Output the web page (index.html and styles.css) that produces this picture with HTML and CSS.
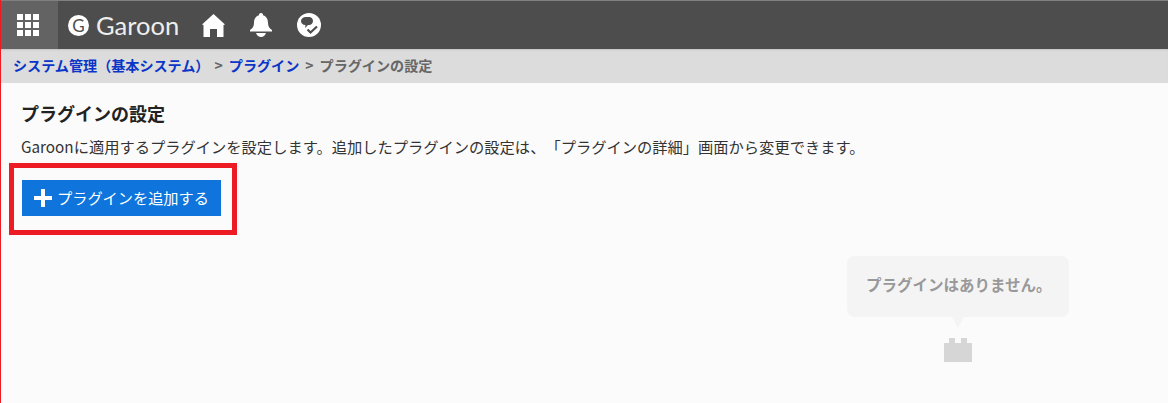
FILE: index.html
```html
<!DOCTYPE html>
<html lang="ja">
<head>
<meta charset="utf-8">
<title>プラグインの設定</title>
<link rel="stylesheet" href="styles.css">
</head>
<body>
<div class="page">
  <header class="topbar">
    <div class="apps">
      <svg width="22" height="22" viewBox="0 0 22 22" fill="#fff"><rect x="0" y="0" width="6" height="6"/><rect x="8" y="0" width="6" height="6"/><rect x="16" y="0" width="6" height="6"/><rect x="0" y="8" width="6" height="6"/><rect x="8" y="8" width="6" height="6"/><rect x="16" y="8" width="6" height="6"/><rect x="0" y="16" width="6" height="6"/><rect x="8" y="16" width="6" height="6"/><rect x="16" y="16" width="6" height="6"/></svg>
    </div>
    <div class="logo">
      <span class="logo-mark">G</span>
      <span class="logo-text">Garoon</span>
    </div>
    <nav class="icons">
      <svg width="23" height="23" viewBox="0 0 23 23" fill="#fff"><path d="M11.500 0 L23 10.500 L21.500 11 V23 H15 V15 H8 V23 H1.500 V11 L0 10.500 Z"/></svg>
      <svg width="24" height="24" viewBox="0 0 24 24" fill="#fff"><path d="M12 0 a2 2 0 0 1 2 2.300 C18 3.500 19 7 19 10 C19 13.500 20.500 15.500 23 17 V18.500 H1 V17 C3.500 15.500 5 13.500 5 10 C5 7 6 3.500 10 2.300 A2 2 0 0 1 12 0 Z"/><path d="M7 20 H17 Q15.500 24 12 24 Q8.500 24 7 20 Z"/></svg>
      <svg width="24" height="24" viewBox="0 0 24 24"><circle cx="12" cy="12" r="12" fill="#fff"/><path d="M9 4 H12 C14.500 4 16 5.800 16 8 C16 10.200 14.500 12 12 12 H11 L8 15 L8.500 12 C5.500 12 4 10.200 4 8 C4 5.800 6 4 9 4 Z" fill="#4d4d4d"/><path d="M10.500 16.500 L13.500 19.500 L20 13.500" fill="none" stroke="#4d4d4d" stroke-width="2.200"/></svg>
    </nav>
  </header>
  <div class="crumbs">
    <a class="crumb-link">システム管理（基本システム）</a>
    <span class="crumb-sep">&gt;</span>
    <a class="crumb-link">プラグイン</a>
    <span class="crumb-sep">&gt;</span>
    <span class="crumb-current">プラグインの設定</span>
  </div>
  <main class="content">
    <h1 class="title">プラグインの設定</h1>
    <p class="desc">Garoonに適用するプラグインを設定します。追加したプラグインの設定は、「プラグインの詳細」画面から変更できます。</p>
    <button class="add-btn" type="button">
      <svg width="18" height="18" viewBox="0 0 18 18" fill="#fff"><path d="M7 0 H11 V7 H18 V11 H11 V18 H7 V11 H0 V7 H7 Z"/></svg>
      <span class="add-label">プラグインを追加する</span>
    </button>
    <div class="empty">
      <div class="bubble">プラグインはありません。</div>
      <svg class="brick" width="28" height="24" viewBox="0 0 28 24" fill="#d6d6d6"><path d="M5 0 H11 V5 H17 V0 H23 V5 H28 V24 H0 V5 H5 Z"/></svg>
    </div>
  </main>
  <div class="highlight"></div>
</div>
</body>
</html>
```
FILE: styles.css
```css
* { box-sizing: border-box; }
html, body { margin: 0; height: 100%; }
body {
  font-family: "Noto Sans CJK JP", "Liberation Sans", sans-serif;
  background: #fbfbfb;
  overflow: hidden;
  text-spacing-trim: space-all;
}
.page {
  position: relative;
  height: 403px;
  border-left: 1px solid #ed1c24;
  display: flex;
  flex-direction: column;
}
.topbar {
  height: 49px;
  background: #4d4d4d;
  border-top: 1px solid #808080;
  display: flex;
  align-items: center;
  flex: none;
}
.apps {
  width: 57px;
  height: 48px;
  background: #636363;
  display: flex;
  align-items: center;
  padding-left: 16px;
}
.logo {
  display: flex;
  align-items: center;
  margin-left: 10px;
  gap: 7px;
  width: 123px;
}
.logo-mark {
  width: 21px;
  height: 21px;
  border-radius: 50%;
  background: #fff;
  color: #4d4d4d;
  font: 17px/21px "Lato", sans-serif;
  text-align: center;
}
.logo-text {
  font: 400 25.500px/30px "Lato", sans-serif;
  color: #eee;
}
.icons {
  display: flex;
  gap: 24px;
  margin-left: 11px;
  align-items: center;
}
.crumbs {
  height: 34px;
  background: #dcdcdc;
  padding: 0 0 2px 12px;
  display: flex;
  align-items: center;
  font-size: 14.100px;
  font-weight: bold;
  flex: none;
  box-shadow: inset 0 2px 2px -1px #c4c4c4;
  white-space: nowrap;
}
.crumb-link { color: #0a35c8; }
.crumb-sep { color: #666; margin: 0 6px; font-weight: bold; }
.crumb-sep:first-of-type { margin-left: 5px; }
.crumb-current { color: #666; }
.content {
  position: relative;
  flex: 1;
  padding: 18px 0 0 20px;
}
.title {
  margin: 0;
  font-size: 18px;
  line-height: 24px;
  font-weight: bold;
  color: #222;
}
.desc {
  margin: 11px 0 0;
  font-size: 15.270px;
  line-height: 20px;
  color: #333;
  white-space: nowrap;
}
.add-btn {
  margin-top: 24px;
  margin-left: 1px;
  width: 199px;
  height: 36px;
  background: #0f75dd;
  border: 0;
  padding: 0 0 0 12px;
  display: flex;
  align-items: center;
  gap: 5px;
  color: #fff;
  font-family: inherit;
  font-size: 15.200px;
}
.add-label { padding-bottom: 3px; }
.empty {
  position: absolute;
  left: 846px;
  top: 173px;
  width: 222px;
  display: flex;
  flex-direction: column;
  align-items: center;
}
.bubble {
  position: relative;
  width: 222px;
  height: 61px;
  border-radius: 8px;
  background: #f4f4f4;
  color: #999;
  font-size: 15.500px;
  font-weight: bold;
  line-height: 57px;
  padding-left: 19px;
}
.bubble::after {
  content: "";
  position: absolute;
  left: 105px;
  top: 61px;
  border-left: 6px solid transparent;
  border-right: 6px solid transparent;
  border-top: 11px solid #f4f4f4;
}
.brick { margin: 21px 0 0 0; }
.highlight {
  position: absolute;
  left: 8px;
  top: 163px;
  width: 228px;
  height: 72px;
  border: 5px solid #ed1c24;
}
```
